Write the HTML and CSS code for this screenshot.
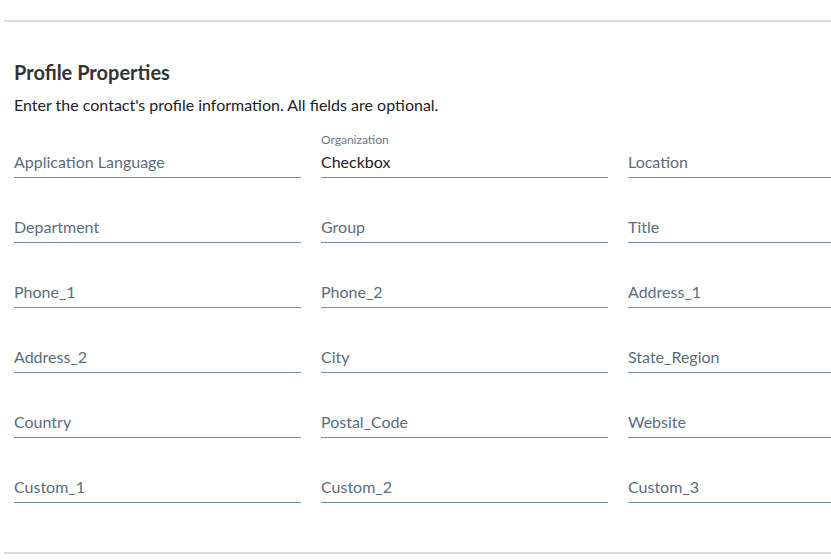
FILE: index.html
```html
<!DOCTYPE html>
<html lang="en">
<head>
    <meta charset="UTF-8">
    <meta name="viewport" content="width=device-width, initial-scale=1.0">
    <title>Profile Properties</title>
    <link rel="stylesheet" href="styles.css">
</head>
<body>
    <div class="panel">
        <section class="profile">
            <h2>Profile Properties</h2>
            <p class="hint">Enter the contact's profile information. All fields are optional.</p>

            <div class="fields">
                <label class="field"><span class="field-label"></span><input type="text" placeholder="Application Language"></label>
                <label class="field filled"><span class="field-label">Organization</span><input type="text" value="Checkbox" placeholder="Organization"></label>
                <label class="field"><span class="field-label"></span><input type="text" placeholder="Location"></label>

                <label class="field"><span class="field-label"></span><input type="text" placeholder="Department"></label>
                <label class="field"><span class="field-label"></span><input type="text" placeholder="Group"></label>
                <label class="field"><span class="field-label"></span><input type="text" placeholder="Title"></label>

                <label class="field"><span class="field-label"></span><input type="text" placeholder="Phone_1"></label>
                <label class="field"><span class="field-label"></span><input type="text" placeholder="Phone_2"></label>
                <label class="field"><span class="field-label"></span><input type="text" placeholder="Address_1"></label>

                <label class="field"><span class="field-label"></span><input type="text" placeholder="Address_2"></label>
                <label class="field"><span class="field-label"></span><input type="text" placeholder="City"></label>
                <label class="field"><span class="field-label"></span><input type="text" placeholder="State_Region"></label>

                <label class="field"><span class="field-label"></span><input type="text" placeholder="Country"></label>
                <label class="field"><span class="field-label"></span><input type="text" placeholder="Postal_Code"></label>
                <label class="field"><span class="field-label"></span><input type="text" placeholder="Website"></label>

                <label class="field"><span class="field-label"></span><input type="text" placeholder="Custom_1"></label>
                <label class="field"><span class="field-label"></span><input type="text" placeholder="Custom_2"></label>
                <label class="field"><span class="field-label"></span><input type="text" placeholder="Custom_3"></label>
            </div>
        </section>
    </div>
</body>
</html>
```

FILE: styles.css
```css
body {
    font-family: 'Lato', 'Liberation Sans', sans-serif;
    margin: 0;
    padding: 20px 0 0 4px;
    background: #fff;
    color: #222;
}
.panel {
    border-top: 2px solid #d6dce2;
    border-bottom: 2px solid #d6dce2;
}
.profile {
    padding: 38px 10px 49px;
    overflow: hidden;
}
h2 {
    font-size: 20px;
    line-height: 24px;
    font-weight: 700;
    color: #333;
    margin: 0 0 11px;
}
.hint {
    font-size: 16px;
    line-height: 20px;
    color: #222;
    margin: 0 0 18px;
}
.fields {
    display: grid;
    grid-template-columns: repeat(3, 287px);
    column-gap: 20px;
    row-gap: 20px;
}
.field {
    display: flex;
    flex-direction: column;
    border-bottom: 1px solid #7b8fa0;
    padding-bottom: 4px;
}
.field-label {
    font-size: 12px;
    line-height: 14px;
    height: 14px;
    color: #6b7785;
    margin-bottom: 4px;
}
.field input {
    font-family: inherit;
    font-size: 16px;
    line-height: 22px;
    height: 22px;
    padding: 0;
    border: none;
    outline: none;
    background: transparent;
    color: #222;
}
.field input::placeholder {
    color: #5c6c7c;
    opacity: 1;
}
```
